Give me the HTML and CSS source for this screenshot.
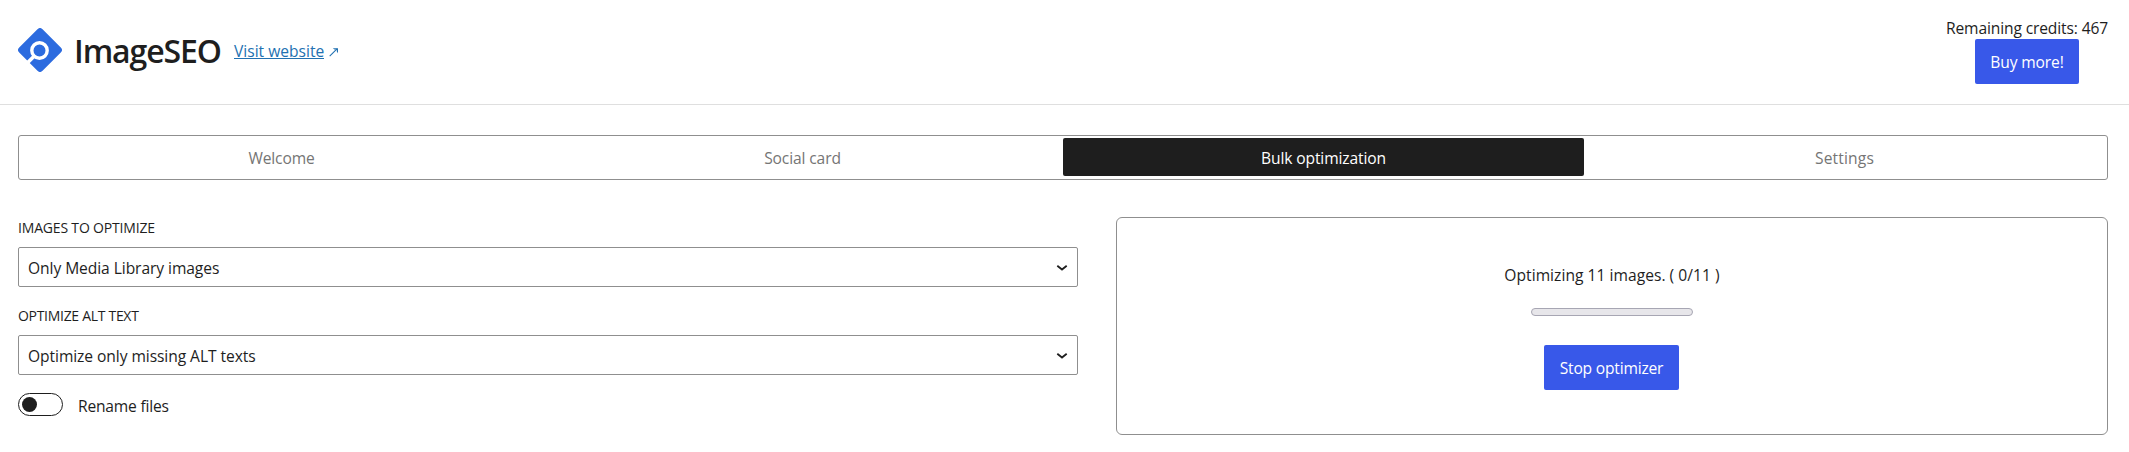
FILE: index.html
```html
<!DOCTYPE html>
<html lang="en">
<head>
<meta charset="utf-8">
<title>ImageSEO</title>
<link rel="stylesheet" href="styles.css">
</head>
<body>
<header class="header">
  <div class="brand">
    <svg class="logo" viewBox="0 0 44 44">
      <rect x="5.5" y="5.5" width="33" height="33" rx="3.6" transform="rotate(45 22 22)" fill="#2c6bdf"/>
      <circle cx="21.5" cy="22.5" r="7.7" fill="none" stroke="#fff" stroke-width="3.4"/>
      <path d="M15.8 28.4 9.3 34.9" stroke="#fff" stroke-width="3.6"/>
    </svg>
    <h1 class="title">ImageSEO</h1>
    <a class="visit" href="#"><span class="visit-text">Visit website</span><svg class="arrow" viewBox="0 0 10 10"><path d="M.7 9.1 8 1.8" fill="none" stroke="currentColor" stroke-width="1.1"/><path d="M3.8 1.2H9v5L7.8 4.6V2.4H5.4z" fill="currentColor"/></svg></a>
  </div>
  <div class="credits">
    <span class="credits-text">Remaining credits: 467</span>
    <button class="button buy"><span class="buy-text">Buy more!</span></button>
  </div>
</header>
<main class="main">
  <nav class="tabs">
    <button class="tab"><span class="tab-welcome">Welcome</span></button>
    <button class="tab"><span class="tab-social">Social card</span></button>
    <button class="tab active"><span class="tab-bulk">Bulk optimization</span></button>
    <button class="tab"><span class="tab-settings">Settings</span></button>
  </nav>
  <div class="columns">
    <section class="form">
      <div class="label"><span class="label-images">Images to optimize</span></div>
      <div class="select"><span class="value-images">Only Media Library images</span>
        <svg class="chevron" viewBox="0 0 12 8"><path d="M1.3 1.7 6 5.5l4.7-3.8" fill="none" stroke="#1e1e1e" stroke-width="1.8"/></svg></div>
      <div class="label second"><span class="label-alt">Optimize alt text</span></div>
      <div class="select"><span class="value-alt">Optimize only missing ALT texts</span>
        <svg class="chevron" viewBox="0 0 12 8"><path d="M1.3 1.7 6 5.5l4.7-3.8" fill="none" stroke="#1e1e1e" stroke-width="1.8"/></svg></div>
      <div class="toggle-row"><span class="toggle"><span class="knob"></span></span><span class="rename">Rename files</span></div>
    </section>
    <section class="panel">
      <span class="status">Optimizing 11 images. ( 0/11 )</span>
      <div class="progress"></div>
      <button class="button stop"><span class="stop-text">Stop optimizer</span></button>
    </section>
  </div>
</main>
</body>
</html>
```
FILE: styles.css
```css
* { box-sizing: border-box; }
body {
  margin: 0;
  height: 452px;
  overflow: hidden;
  background: #fff;
  color: #1e1e1e;
  font: 15.6px/22px "Segoe UI", "Open Sans", "Noto Sans", sans-serif;
  letter-spacing: -0.13px;
  white-space: nowrap;
}
button { font: inherit; letter-spacing: inherit; border: 0; padding: 0; }
.header {
  display: flex;
  justify-content: space-between;
  height: 105px;
  padding: 0 21px 0 18px;
  border-bottom: 1px solid #dfdfdf;
}
.brand { display: flex; align-items: flex-start; padding-top: 28px; }
.logo { width: 44px; height: 44px; }
.title {
  margin: 3px 0 0 12px;
  width: 147px;
  font-size: 32px;
  line-height: 40px;
  font-weight: 600;
  letter-spacing: -1.1px;
}
.visit { display: flex; align-items: flex-start; margin: 12px 0 0 13px; color: #2271b1; text-decoration: none; }
.visit-text { width: 90px; border-bottom: 1px solid #2271b1; line-height: 23px; height: 19px; letter-spacing: 0; }
.arrow { width: 10px; height: 10px; margin: 7px 0 0 5px; }
.credits { display: flex; flex-direction: column; align-items: center; padding-top: 17px; width: 162px; }
.button { background: #3858e9; color: #fff; border-radius: 2px; height: 45px; }
.buy { width: 104px; }
.main { padding: 30px 21px 0 18px; }
.tabs {
  display: grid;
  grid-template-columns: repeat(4, 1fr);
  height: 45px;
  padding: 2px;
  border: 1px solid #8f8f8f;
  border-radius: 3px;
}
.tab { background: none; color: #757575; height: 38px; border-radius: 2px; padding-top: 2px; }
.tab-settings { letter-spacing: 0.15px; }
.tab.active { background: #1e1e1e; color: #fff; }
.columns { display: grid; grid-template-columns: 1060px 992px; column-gap: 38px; margin-top: 37px; }
.label { height: 30px; font-size: 14px; line-height: 22px; text-transform: uppercase; letter-spacing: -0.3px; }
.label-images { letter-spacing: -0.18px; }
.second { margin-top: 18px; }
.select {
  display: flex;
  align-items: center;
  justify-content: space-between;
  height: 40px;
  padding: 2px 9px 0 9px;
  border: 1px solid #8f8f8f;
  border-radius: 2px;
  letter-spacing: -0.07px;
}
.chevron { width: 12px; height: 8px; }
.toggle-row { display: flex; align-items: flex-start; gap: 15px; margin-top: 18px; }
.toggle { width: 45px; height: 23px; padding: 3px; border: 1px solid #1e1e1e; border-radius: 12px; }
.knob { display: block; width: 15px; height: 15px; border-radius: 50%; background: #1e1e1e; }
.rename { margin-top: 2px; letter-spacing: -0.2px; }
.panel {
  display: flex;
  flex-direction: column;
  align-items: center;
  height: 218px;
  padding-top: 46px;
  border: 1px solid #8f8f8f;
  border-radius: 6px;
}
.status { letter-spacing: 0.03px; }
.progress { width: 162px; height: 8px; margin: 22px 0 29px; border: 1px solid #a7a6b3; border-radius: 4px; background: #e7e6ea; }
.stop { width: 135px; margin-right: 1px; letter-spacing: -0.2px; }
```
